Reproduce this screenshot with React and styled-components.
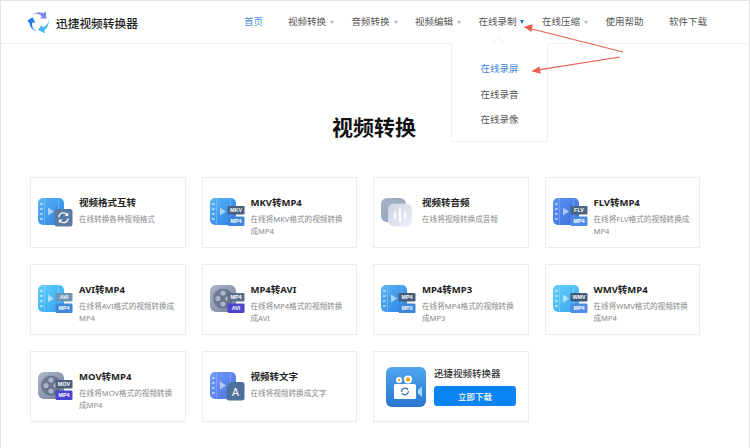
import React from 'react'
import styled, { createGlobalStyle } from 'styled-components';

const GlobalStyle = createGlobalStyle`
  html, body {
    margin: 0;
    padding: 0;
    background: #fff;
    font-family: "Noto Sans", "Noto Sans CJK SC", sans-serif;
  }
`;

const Page = styled.div`
  position: relative;
  box-sizing: border-box;
  width: 750px;
  height: 448px;
  overflow: hidden;
  background: #fff;
  border: 1px solid #e2e2e2;
  border-bottom: 0;
`;

const Header = styled.header`
  display: flex;
  align-items: center;
  height: 42px;
  border-bottom: 1px solid #f0f0f0;
`;

const Brand = styled.div`
  display: flex;
  align-items: center;
  gap: 6px;
  width: 243px;
  padding-left: 27px;
  box-sizing: border-box;
  font-size: 11.7px;
  font-weight: 500;
  color: #222;
`;

const Nav = styled.nav`
  display: grid;
  grid-template-columns: 44px repeat(7, 63.5px);
`;

const NavItem = styled.div`
  position: relative;
  display: flex;
  align-items: center;
  gap: ${p => (p.$open ? 3 : 4)}px;
  font-size: 9.5px;
  line-height: 14px;
  color: ${p => (p.$active ? '#4a90d9' : '#555')};
`;

const Caret = styled.span`
  width: 0;
  height: 0;
  border-left: 2.5px solid transparent;
  border-right: 2.5px solid transparent;
  border-top: ${p => (p.$open ? 4 : 3.5)}px solid ${p => (p.$open ? '#1f6fd0' : '#b4b4b4')};
`;

const Dropdown = styled.div`
  position: absolute;
  top: 28px;
  left: -28px;
  box-sizing: border-box;
  width: 97px;
  height: 99px;
  padding-top: 19px;
  background: #fff;
  border: 1px solid #f0f0f0;
  border-top: 0;
  display: flex;
  flex-direction: column;
  gap: 11.5px;
  &::before {
    content: "";
    position: absolute;
    top: -5px;
    left: 43px;
    width: 7px;
    height: 7px;
    background: #fff;
    border-left: 1px solid #f0f0f0;
    border-top: 1px solid #f0f0f0;
    transform: rotate(45deg);
  }
`;

const DropItem = styled.div`
  padding-left: 29px;
  font-size: 9.5px;
  line-height: 14px;
  color: ${p => (p.$active ? '#3d86d8' : '#555')};
`;

const Title = styled.h1`
  margin: 68px 0 35px;
  padding-right: 2px;
  font-size: 21px;
  line-height: 30px;
  font-weight: 700;
  color: #111;
  text-align: center;
`;

const Grid = styled.section`
  display: grid;
  grid-template-columns: repeat(4, 155.5px);
  grid-auto-rows: 71px;
  column-gap: 16px;
  row-gap: 16px;
  padding-left: 29px;
`;

const Card = styled.div`
  box-sizing: border-box;
  display: flex;
  align-items: flex-start;
  gap: 6px;
  padding: 18px 0 0 7px;
  border: 1px solid #ececec;
  background: #fff;
`;

const IconWrap = styled.div`
  flex: none;
  width: 35px;
  height: 29px;
  margin-top: 2px;
`;

const CardText = styled.div`
  width: 99px;
`;

const CardTitle = styled.div`
  font-size: 9.5px;
  line-height: 14px;
  font-weight: 700;
  color: #222;
`;

const CardDesc = styled.div`
  margin-top: 3px;
  font-size: 7.6px;
  line-height: 12px;
  color: #888;
`;

const DownloadCard = styled(Card)`
  gap: 8px;
  padding: 15px 0 0 12px;
`;

const DownloadBody = styled.div`
  display: flex;
  flex-direction: column;
  gap: 5px;
  margin-top: 0;
`;

const DownloadTitle = styled.div`
  font-size: 9.5px;
  line-height: 14px;
  font-weight: 500;
  color: #333;
`;

const DownloadButton = styled.button`
  width: 82px;
  height: 20px;
  padding: 0;
  border: 0;
  border-radius: 3px;
  background: #0a84f5;
  color: #fff;
  font-family: inherit;
  font-size: 8.5px;
  font-weight: 500;
`;

const Annotations = styled.svg`
  position: absolute;
  top: -1px;
  left: -1px;
  width: 750px;
  height: 448px;
  pointer-events: none;
`;

const Logo = () => {
  const blade = "M3.960 5.250A10.500 10.500 0 0 1 16.500 2.500L19.500 0.500L20 8.500L13 8L15.200 5.800A7.500 7.500 0 0 0 3.960 5.250Z";
  return (
    <svg width="22" height="22" viewBox="0 0 24 24">
      <path d={blade} fill="#7d86ea" />
      <path d={blade} fill="#45b4f2" transform="rotate(120 12 12)" />
      <path d={blade} fill="#1f7ae0" transform="rotate(240 12 12)" />
    </svg>
  );
};

// film strip behind the badges
const Film = ({ id, from, to }) => (
  <g>
    <defs>
      <linearGradient id={id} x1="0" y1="0" x2="1" y2="1">
        <stop offset="0" stopColor={from} />
        <stop offset="1" stopColor={to} />
      </linearGradient>
    </defs>
    <rect x="0" y="0" width="26" height="27" rx="5" fill={`url(#${id})`} />
    {[5, 10, 15, 20].map(y => (
      <rect key={y} x="2" y={y} width="2.6" height="2" rx="0.5" fill="#fff" opacity="0.55" />
    ))}
    <rect x="6" y="0" width="0.8" height="27" fill="#fff" opacity="0.25" />
    <rect x="20" y="0" width="0.8" height="27" fill="#fff" opacity="0.25" />
    <path d="M10 9.5L16 13.5L10 17.5Z" fill="#fff" opacity="0.55" />
  </g>
);

const Reel = ({ id }) => (
  <g>
    <defs>
      <linearGradient id={id} x1="0" y1="0" x2="1" y2="1">
        <stop offset="0" stopColor="#a9b6ca" />
        <stop offset="1" stopColor="#77839b" />
      </linearGradient>
    </defs>
    <rect x="0" y="0" width="26" height="27" rx="6" fill={`url(#${id})`} />
    <circle cx="13" cy="13.5" r="10" fill="#5d6a82" opacity="0.75" />
    {[[13, 8], [8, 13.5], [18, 13.5], [13, 19]].map(([cx, cy]) => (
      <circle key={cx + '-' + cy} cx={cx} cy={cy} r="2.6" fill="#aab5c8" />
    ))}
  </g>
);

const Badge = ({ y, h, fill, label }) => (
  <g>
    <rect x="17.5" y={y} width="17" height={h} rx="1.2" fill={fill} />
    <text
      x="26"
      y={y + h / 2 + 1.9}
      textAnchor="middle"
      fontSize="5.4"
      fontWeight="700"
      fontFamily="Liberation Sans, sans-serif"
      fill="#fff"
    >
      {label}
    </text>
  </g>
);

const BadgeIcon = ({ id, kind, from, to, top, topFill, bottom, bottomFill }) => (
  <svg width="35" height="29" viewBox="0 0 35 29">
    {kind === 'reel' ? <Reel id={id} /> : <Film id={id} from={from} to={to} />}
    <Badge y={8} h={8.5} fill={topFill} label={top} />
    <Badge y={18.5} h={9.5} fill={bottomFill} label={bottom} />
  </svg>
);

const ConvertIcon = () => (
  <svg width="35" height="29" viewBox="0 0 35 29">
    <Film id="f-convert" from="#5ab4f5" to="#2c83e6" />
    <rect x="16.5" y="11" width="18" height="17.5" rx="2.5" fill="#5b7ba3" />
    <g fill="none" stroke="#fff" strokeWidth="1.3" strokeLinecap="round">
      <path d="M20.8 18.5A4.8 4.8 0 0 1 29 16.4" />
      <path d="M30.2 21A4.8 4.8 0 0 1 22 23.1" />
    </g>
    <path d="M30.2 14.2V18H26.6Z" fill="#fff" />
    <path d="M20.8 25.2V21.5H24.4Z" fill="#fff" />
  </svg>
);

const AudioIcon = () => (
  <svg width="35" height="29" viewBox="0 0 35 29">
    <defs>
      <linearGradient id="f-audio-a" x1="0" y1="0" x2="1" y2="1">
        <stop offset="0" stopColor="#a7b6cc" />
        <stop offset="1" stopColor="#8c9ab4" />
      </linearGradient>
      <linearGradient id="f-audio-b" x1="0" y1="0" x2="1" y2="1">
        <stop offset="0" stopColor="#cdd6e4" />
        <stop offset="1" stopColor="#eceff5" />
      </linearGradient>
    </defs>
    <rect x="0" y="0" width="25" height="24" rx="6" fill="url(#f-audio-a)" />
    <rect x="7" y="5.5" width="24" height="23" rx="6" fill="url(#f-audio-b)" />
    <g stroke="#fff" strokeWidth="1.8" strokeLinecap="round">
      <path d="M14 14.5V20" />
      <path d="M19 11V23" />
      <path d="M24 14.5V20" />
    </g>
  </svg>
);

const TextIcon = () => (
  <svg width="35" height="29" viewBox="0 0 35 29">
    <Film id="f-text" from="#6f9bf5" to="#4c72e8" />
    <path d="M21 10H32A2.5 2.5 0 0 1 34.5 12.5V26A2.5 2.5 0 0 1 32 28.5H19A2.5 2.5 0 0 1 16.500 26V14.500Z" fill="#4f6f9c" />
    <text x="25.500" y="24" textAnchor="middle" fontSize="10.500" fontFamily="Liberation Sans, sans-serif" fill="#fff">A</text>
  </svg>
);

const AppIcon = () => (
  <svg width="40" height="40" viewBox="0 0 40 40">
    <defs>
      <linearGradient id="f-app" x1="0" y1="0" x2="0" y2="1">
        <stop offset="0" stopColor="#4fa6ee" />
        <stop offset="1" stopColor="#2a76cf" />
      </linearGradient>
    </defs>
    <rect width="40" height="40" rx="6" fill="url(#f-app)" />
    <circle cx="13" cy="13" r="3" fill="#fff" />
    <circle cx="13" cy="13" r="1.3" fill="#f5b52e" />
    <circle cx="22" cy="12.500" r="4" fill="#fff" />
    <circle cx="22" cy="12.500" r="2.200" fill="#f5a623" />
    <rect x="8" y="17" width="22" height="15" rx="1.500" fill="#fff" />
    <path d="M32 23L36 19.500V30L32 26.500Z" fill="#a8d6f5" />
    <g fill="none" stroke="#2a76cf" strokeWidth="1.200" strokeLinecap="round">
      <path d="M15.500 24.500A3.600 3.600 0 0 1 21.800 22.500" />
      <path d="M22.500 24.500A3.600 3.600 0 0 1 16.200 26.500" />
    </g>
  </svg>
);

const navLinks = [
  { label: '首页', active: true },
  { label: '视频转换', caret: true },
  { label: '音频转换', caret: true },
  { label: '视频编辑', caret: true },
  { label: '在线录制', caret: true, open: true },
  { label: '在线压缩', caret: true },
  { label: '使用帮助' },
  { label: '软件下载' },
];

const blue = ['#5ab4f5', '#2c83e6'];

const tools = [
  { title: '视频格式互转', desc: '在线转换各种视频格式', icon: <ConvertIcon /> },
  { title: 'MKV转MP4', desc: '在线将MKV格式的视频转换成MP4', icon: <BadgeIcon id="f1" from={blue[0]} to={blue[1]} top="MKV" topFill="#4a5f80" bottom="MP4" bottomFill="#3f86dc" /> },
  { title: '视频转音频', desc: '在线将视频转换成音频', icon: <AudioIcon /> },
  { title: 'FLV转MP4', desc: '在线将FLV格式的视频转换成MP4', icon: <BadgeIcon id="f2" from="#5b93f2" to="#3c6ee0" top="FLV" topFill="#4b6580" bottom="MP4" bottomFill="#4f8be6" /> },
  { title: 'AVI转MP4', desc: '在线将AVI格式的视频转换成MP4', icon: <BadgeIcon id="f3" from="#62d0fb" to="#2fa0ee" top="AVI" topFill="#6f94b4" bottom="MP4" bottomFill="#3f86dc" /> },
  { title: 'MP4转AVI', desc: '在线将MP4格式的视频转换成AVI', icon: <BadgeIcon id="f4" kind="reel" top="MP4" topFill="#5d6f8c" bottom="AVI" bottomFill="#4a46cf" /> },
  { title: 'MP4转MP3', desc: '在线将MP4格式的视频转换成MP3', icon: <BadgeIcon id="f5" from={blue[0]} to={blue[1]} top="MP4" topFill="#4a5f80" bottom="MP3" bottomFill="#3f86dc" /> },
  { title: 'WMV转MP4', desc: '在线将WMV格式的视频转换成MP4', icon: <BadgeIcon id="f6" from="#62d0fb" to="#3aa6ee" top="WMV" topFill="#42587c" bottom="MP4" bottomFill="#4f8be6" /> },
  { title: 'MOV转MP4', desc: '在线将MOV格式的视频转换成MP4', icon: <BadgeIcon id="f7" kind="reel" top="MOV" topFill="#4f5f7c" bottom="MP4" bottomFill="#4a46cf" /> },
  { title: '视频转文字', desc: '在线将视频转换成文字', icon: <TextIcon /> },
];

const App = () => (
  <Page>
    <GlobalStyle />
    <Header>
      <Brand>
        <Logo />
        迅捷视频转换器
      </Brand>
      <Nav>
        {navLinks.map(link => (
          <NavItem key={link.label} $active={link.active} $open={link.open}>
            {link.label}
            {link.caret && <Caret $open={link.open} />}
            {link.open && (
              <Dropdown>
                <DropItem $active>在线录屏</DropItem>
                <DropItem>在线录音</DropItem>
                <DropItem>在线录像</DropItem>
              </Dropdown>
            )}
          </NavItem>
        ))}
      </Nav>
    </Header>
    <Title>视频转换</Title>
    <Grid>
      {tools.map(tool => (
        <Card key={tool.title}>
          <IconWrap>{tool.icon}</IconWrap>
          <CardText>
            <CardTitle>{tool.title}</CardTitle>
            <CardDesc>{tool.desc}</CardDesc>
          </CardText>
        </Card>
      ))}
      <DownloadCard>
        <AppIcon />
        <DownloadBody>
          <DownloadTitle>迅捷视频转换器</DownloadTitle>
          <DownloadButton>立即下载</DownloadButton>
        </DownloadBody>
      </DownloadCard>
    </Grid>
    <Annotations viewBox="0 0 750 448">
      <g stroke="#e8604f" strokeWidth="1.2" fill="#e8604f">
        <path d="M623 52L530 28.500" fill="none" />
        <path d="M525 27L532 25L531 31Z" />
        <path d="M620 57L537 70.200" fill="none" />
        <path d="M533 71L539 67.500L540 73Z" />
      </g>
    </Annotations>
  </Page>
);

export default App;
